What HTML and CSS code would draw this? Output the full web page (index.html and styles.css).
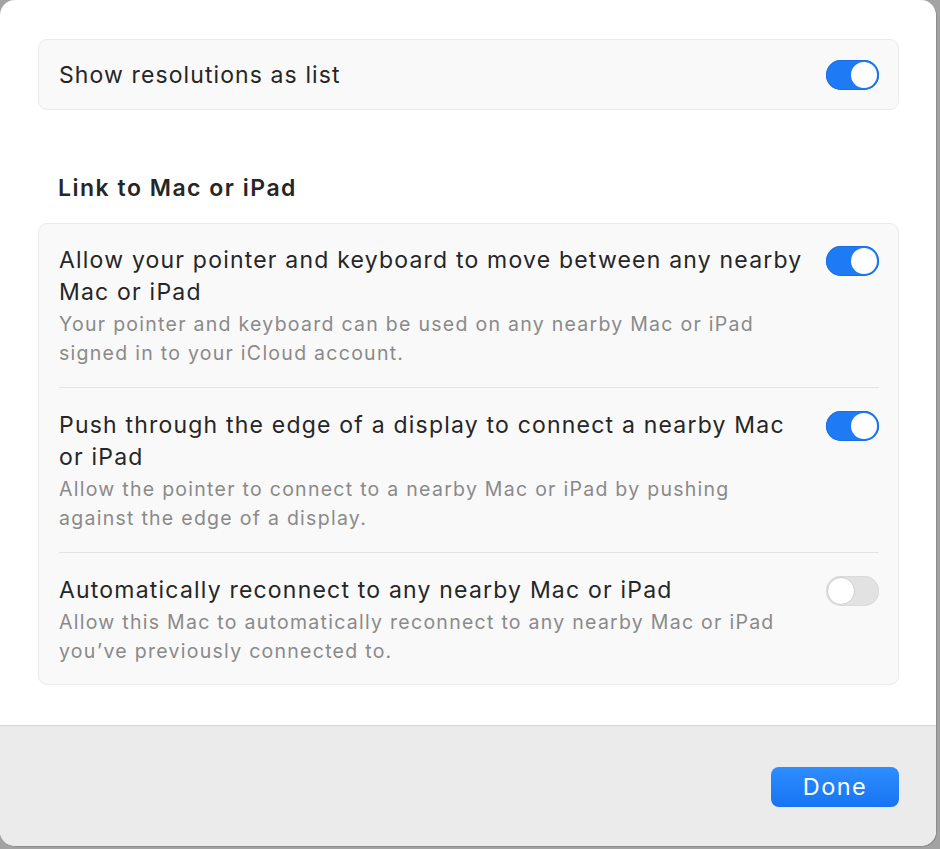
FILE: index.html
```html
<!DOCTYPE html>
<html lang="en">
<head>
<meta charset="utf-8">
<title>Displays</title>
<link rel="stylesheet" href="styles.css">
</head>
<body>
<div class="sheet">
  <div class="content">
    <div class="card single">
      <span class="label">Show resolutions as list</span>
      <span class="toggle on"><span class="knob"></span></span>
    </div>

    <h2 class="section-title">Link to Mac or iPad</h2>

    <div class="card list">
      <div class="row">
        <div class="text">
          <div class="label">Allow your pointer and keyboard to move between any nearby Mac or iPad</div>
          <div class="sub">Your pointer and keyboard can be used on any nearby Mac or iPad signed in to your iCloud account.</div>
        </div>
        <span class="toggle on"><span class="knob"></span></span>
      </div>
      <div class="row">
        <div class="text">
          <div class="label">Push through the edge of a display to connect a nearby Mac or iPad</div>
          <div class="sub">Allow the pointer to connect to a nearby Mac or iPad by pushing against the edge of a display.</div>
        </div>
        <span class="toggle on"><span class="knob"></span></span>
      </div>
      <div class="row">
        <div class="text">
          <div class="label">Automatically reconnect to any nearby Mac or iPad</div>
          <div class="sub">Allow this Mac to automatically reconnect to any nearby Mac or iPad you’ve previously connected to.</div>
        </div>
        <span class="toggle off"><span class="knob"></span></span>
      </div>
    </div>
  </div>
  <div class="footer">
    <button class="done">Done</button>
  </div>
</div>
</body>
</html>
```

FILE: styles.css
```css
* { box-sizing: border-box; }
html, body {
  margin: 0;
  padding: 0;
  width: 940px;
  height: 849px;
  background: #a3a3a3;
  font-family: Inter, "Noto Sans", "Liberation Sans", sans-serif;
  color: #262626;
  overflow: hidden;
}
.sheet {
  width: 936px;
  height: 846px;
  background: #ffffff;
  border-radius: 15px;
  overflow: hidden;
  display: flex;
  flex-direction: column;
  box-shadow: 1px 1px 0 #8c8c8c;
}
.content {
  flex: 1;
  padding: 39px 37px 0 38px;
}
.card {
  background: #f9f9f9;
  border: 1px solid #ebebeb;
  border-radius: 9px;
}
.single {
  height: 71px;
  display: flex;
  align-items: center;
  justify-content: space-between;
  padding: 1px 19px 0 20px;
}
.label {
  font-size: 23px;
  line-height: 32px;
  letter-spacing: 1.2px;
}
.single .label { letter-spacing: 1.1px; }
.section-title {
  margin: 0;
  padding: 62px 0 0 20px;
  height: 113px;
  font-size: 23px;
  font-weight: 600;
  line-height: 32px;
  letter-spacing: 1.5px;
}
.list {
  padding: 0 19px 0 20px;
}
.row {
  display: flex;
  justify-content: space-between;
  align-items: flex-start;
  padding: 21px 0 20px;
  border-bottom: 1px solid #e4e4e4;
}
.row:first-child {
  padding-top: 20px;
}
.row:last-child {
  border-bottom: none;
  padding-bottom: 19px;
}
.text {
  width: 748px;
}
.sub {
  margin-top: 2px;
  font-size: 19.5px;
  line-height: 28.5px;
  letter-spacing: 1.27px;
  color: #8a8a8a;
}
.toggle {
  flex: none;
  width: 53px;
  height: 30px;
  border-radius: 15px;
  position: relative;
  margin-top: 2px;
}
.single .toggle { margin-top: 0; }
.toggle.on {
  background: #1f7bf5;
  box-shadow: inset 0 0 0 1px #1a6fe0;
}
.toggle.off {
  background: #e2e2e2;
  box-shadow: inset 0 0 0 1px #dadada;
}
.knob {
  position: absolute;
  top: 2px;
  width: 26px;
  height: 26px;
  border-radius: 50%;
  background: #ffffff;
}
.on .knob { right: 2px; }
.off .knob {
  left: 1px;
  top: 1px;
  width: 28px;
  height: 28px;
  border: 1px solid #cfcfcf;
}
.footer {
  height: 121px;
  background: #ebebeb;
  border-top: 1px solid #d6d6d6;
  display: flex;
  justify-content: flex-end;
  align-items: flex-start;
  padding: 41px 37px 0 0;
}
.done {
  width: 128px;
  height: 40px;
  border: none;
  border-radius: 8px;
  background: linear-gradient(#2e8dff, #1674f2);
  color: #ffffff;
  font-family: inherit;
  font-size: 23.5px;
  line-height: 40px;
  letter-spacing: 1.5px;
  padding: 0;
}
```
